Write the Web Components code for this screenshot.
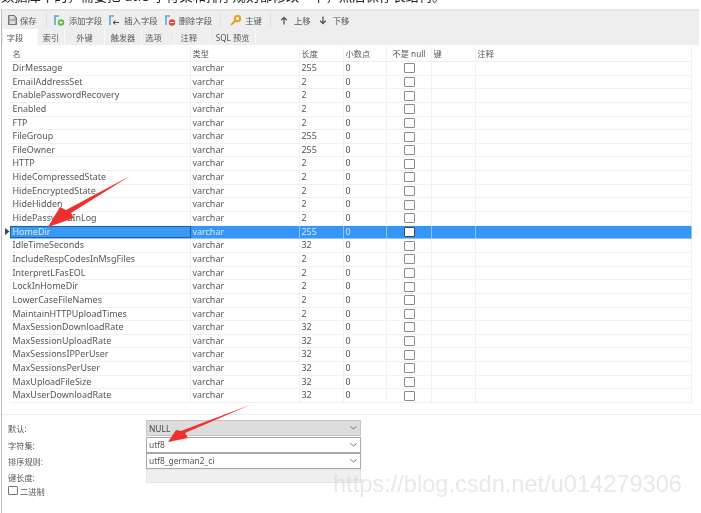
<!DOCTYPE html>
<html lang="zh"><head><meta charset="utf-8"><title>字段</title>
<style>html,body{margin:0;background:#fff}body{width:701px;height:513px;overflow:hidden;font-family:"Noto Sans","Noto Sans CJK SC",sans-serif}</style>
</head><body>
<x-app></x-app>
<script>
const CJK='"Noto Sans","Noto Sans CJK SC",sans-serif';
function el(name,cls,css,html){customElements.define(name,class extends HTMLElement{connectedCallback(){if(this.shadowRoot)return;const s=this.attachShadow({mode:'open'});s.innerHTML='<style>'+css+'</style>'+html(this);}});}

const ICONS={
save:'<svg width="9" height="10" viewBox="0 0 9 10"><path d="M.5.5h6l2 2v7h-8z" fill="#aaa" stroke="#777"/><rect x="2" y="1" width="4" height="3" fill="#ddd"/><rect x="2" y="6" width="5" height="3" fill="#ddd"/></svg>',
add:'<svg width="11" height="11" viewBox="0 0 11 11"><path d="M0 1h5M1 1v9" stroke="#58a6dc" stroke-width="1.6"/><circle cx="7" cy="7.5" r="3.2" fill="#58b947"/><path d="M5.3 7.5h3.4M7 5.8v3.4" stroke="#fff"/></svg>',
ins:'<svg width="11" height="11" viewBox="0 0 11 11"><path d="M0 1h5M1 1v9" stroke="#58a6dc" stroke-width="1.6"/><path d="M4 7.5h6M6.5 5.5l-2.5 2 2.5 2" stroke="#444" fill="none"/></svg>',
del:'<svg width="11" height="11" viewBox="0 0 11 11"><path d="M0 1h5M1 1v9" stroke="#58a6dc" stroke-width="1.6"/><circle cx="7" cy="7.5" r="3.2" fill="#e4483d"/><path d="M5.2 7.5h3.6" stroke="#fff"/></svg>',
key:'<svg width="11" height="11" viewBox="0 0 11 11"><circle cx="7.500" cy="3.500" r="2.700" fill="none" stroke="#e6a21e" stroke-width="2"/><path d="M5.500 5.500L1 10" stroke="#e6a21e" stroke-width="2"/></svg>',
up:'<svg width="8" height="9" viewBox="0 0 8 9"><path d="M4 8.500V1.500M1.200 4.200L4 1.500l2.800 2.700" fill="none" stroke="#555" stroke-width="1.300"/></svg>',
down:'<svg width="8" height="9" viewBox="0 0 8 9"><path d="M4 .5v7M1.200 4.800L4 7.500l2.800-2.700" fill="none" stroke="#555" stroke-width="1.300"/></svg>'
};

el('x-tool','',`:host{display:inline-flex;align-items:center;gap:var(--g,4px);font:8.4px ${CJK};color:#555;white-space:nowrap}`,
 h=>(ICONS[h.getAttribute('icon')]||'')+'<slot></slot>');

el('x-sep','',`:host{display:block;width:1px;height:15px;background:#e2e2e2}`,()=>'');

el('x-toolbar','',`:host{display:flex;align-items:center;height:18px;padding-left:5px;box-sizing:border-box}
 x-tool,x-sep{flex:none}`,()=>`
 <x-tool icon="save" style="--g:3px;margin-left:1px">保存</x-tool><x-sep style="margin-left:9px"></x-sep>
 <x-tool icon="add" style="margin-left:7px">添加字段</x-tool>
 <x-tool icon="ins" style="margin-left:7px">插入字段</x-tool>
 <x-tool icon="del" style="margin-left:7px;--g:3px">删除字段</x-tool><x-sep style="margin-left:8px"></x-sep>
 <x-tool icon="key" style="margin-left:9px">主键</x-tool><x-sep style="margin-left:8px"></x-sep>
 <x-tool icon="up" style="margin-left:9px;--g:6px">上移</x-tool>
 <x-tool icon="down" style="margin-left:8px;--g:6px">下移</x-tool>`);

el('x-tab','',`:host{display:flex;align-items:center;justify-content:center;height:16px;padding-bottom:1px;font:8.2px ${CJK};color:#555;border-right:1px solid #f8f8f8;box-sizing:border-box;white-space:nowrap}
 :host([active]){background:#fff}`,()=>'<slot></slot>');

el('x-tabs','',`:host{display:flex;height:16px;padding-left:1px}`,()=>`
 <x-tab active style="width:35px;padding-right:10px">字段</x-tab><x-tab style="width:27px">索引</x-tab><x-tab style="width:40px">外键</x-tab><x-tab style="width:37px">触发器</x-tab><x-tab style="width:33px;padding-right:9px">选项</x-tab><x-tab style="width:35px;padding-right:6px">注释</x-tab><x-tab style="width:46px">SQL 预览</x-tab>`);

const COLS='181px 109px 44px 43px 45px 44px 216px';
el('x-row','',`:host{display:grid;grid-template-columns:${COLS};height:13.65px;box-sizing:border-box;border-bottom:1px solid #f1f1f1;font:8.95px/12.2px ${CJK};color:#555;white-space:nowrap}
 :host([head]){height:15px;color:#555;font-size:8.2px;line-height:14px;border-bottom:1px solid #ededed}
 :host([sel]){background:#3596f8;color:#d6e9fb;border-bottom-color:#8cc4fb}
 div{padding-left:1.5px;border-right:1px solid #f1f1f1;overflow:hidden;min-width:0}
 div.name{padding-left:2.5px}
 :host([sel]) div{border-right-color:#8cc4fb}
 :host([sel]) div.name{background:#3a9af3;outline:1px solid #1b5f9d;outline-offset:-1px}
 div.ck{display:flex;justify-content:center;align-items:center}
 i{display:block;width:9px;height:8px;border:1px solid #8b8b8b;border-radius:1px;background:#fff}
 :host([sel]) i{border-color:#444}`,h=>{
   const c=h.getAttribute('cells').split('|');
   return c.map((t,i)=>i==4&&!h.hasAttribute('head')?'<div class="ck"><i></i></div>':`<div class="${i==0?'name':''}" ${i==4?'style="text-align:center;padding:0"':''}>${t}</div>`).join('');
 });

const NAMES=[['DirMessage',255],['EmailAddressSet',2],['EnablePasswordRecovery',2],['Enabled',2],['FTP',2],['FileGroup',255],['FileOwner',255],['HTTP',2],['HideCompressedState',2],['HideEncryptedState',2],['HideHidden',2],['HidePasswordInLog',2],['HomeDir',255],['IdleTimeSeconds',32],['IncludeRespCodesInMsgFiles',2],['InterpretLFasEOL',2],['LockInHomeDir',2],['LowerCaseFileNames',2],['MaintainHTTPUploadTimes',2],['MaxSessionDownloadRate',32],['MaxSessionUploadRate',32],['MaxSessionsIPPerUser',32],['MaxSessionsPerUser',32],['MaxUploadFileSize',32],['MaxUserDownloadRate',32]];
el('x-grid','',`:host{display:block;margin-left:8px;width:682px;position:relative}
 svg{position:absolute;left:-5px;top:181px}`,()=>
 `<x-row head cells="名|类型|长度|小数点|不是 null|键|注释"></x-row>`+
 NAMES.map((n,i)=>`<x-row ${n[0]=='HomeDir'?'sel':''} cells="${n[0]}|varchar|${n[1]}|0||| "></x-row>`).join('')+
 `<svg width="5" height="7" viewBox="0 0 5 7"><path d="M0 0l4.500 3.500L0 7z" fill="#444"/></svg>`);

el('x-field','',`:host{display:grid;grid-template-columns:138px 215px;align-items:center;font:8.2px ${CJK};color:#555;height:16.4px}
 .b{box-sizing:border-box;height:16.2px;border:1px solid #a9a9a9;background:#fff;display:flex;align-items:center;justify-content:space-between;padding:0 3px 0 2px;font-family:${CJK};color:#555;font-size:8.4px}
 :host([gray]) .b{background:#dcdcdc;border-color:#c6c6c6;color:#444}
 :host([flat]) .b{background:#efefef;border-color:#e4e4e4;height:14px;align-self:start}`,h=>{
  const flat=h.hasAttribute('flat');
  return `<span>${h.getAttribute('label')}</span><div class="b"><span>${h.getAttribute('value')||''}</span>${flat?'':'<svg width="7" height="4" viewBox="0 0 7 4"><path d="M.5.500L3.500 3l3-2.500" fill="none" stroke="#777"/></svg>'}</div>`;
 });

el('x-check','',`:host{display:flex;align-items:center;gap:2px;font:8.2px ${CJK};color:#555;height:10px}
 i{display:block;width:8px;height:7px;border:1px solid #777;border-radius:1px;background:#fff}`,()=>'<i></i><slot></slot>');

el('x-form','',`:host{display:block;padding:5px 0 0 6px;border-top:1px solid #ececec}`,()=>`
 <x-field gray label="默认:" value="NULL"></x-field>
 <x-field label="字符集:" value="utf8"></x-field>
 <x-field label="排序规则:" value="utf8_german2_ci"></x-field>
 <x-field flat label="键长度:"></x-field>
 <x-check>二进制</x-check>`);

el('x-app','',`:host{display:block;width:701px;height:513px;position:relative;overflow:hidden;background:#fff;filter:blur(.7px)}
 .clip{height:9px;overflow:hidden;position:relative}
 .clip p{margin:-11px 0 0 1px;font:13.300px/14px ${CJK};color:#222;white-space:nowrap}
 .win{margin-left:1px;border-left:1px solid #bdbdbd;height:504px}
 .top{background:#eee;height:36px;border-top:2px solid #e5e5e5;box-sizing:border-box;width:697px}
 .gap{height:2px}
 .spacer{height:11px}
 .wm{position:absolute;left:333px;top:470px;font:23.600px/28px "Liberation Sans",sans-serif;color:rgba(205,205,205,.45);white-space:nowrap}
 svg.arrows{position:absolute;left:0;top:0}`,()=>`
 <div class="clip"><p>数据库中的，需要把 utf8 字符集和排序规则都修改一下，然后保存表结构。</p></div>
 <div class="win">
  <div class="top"><x-toolbar></x-toolbar><x-tabs></x-tabs></div>
  <div class="gap"></div>
  <x-grid></x-grid>
  <div class="spacer"></div>
  <x-form></x-form>
 </div>
 <div class="wm">https://blog.csdn.net/u014279306</div>
 <svg class="arrows" width="701" height="513" viewBox="0 0 701 513"><path d="M130 176L71 213 74 218 48 227 60 207 66 210Z" fill="#f0302e"/><path d="M250 405L185 433 188 438 168 442 176 430 181 431Z" fill="#f0302e"/></svg>`);
</script>
</body></html>
